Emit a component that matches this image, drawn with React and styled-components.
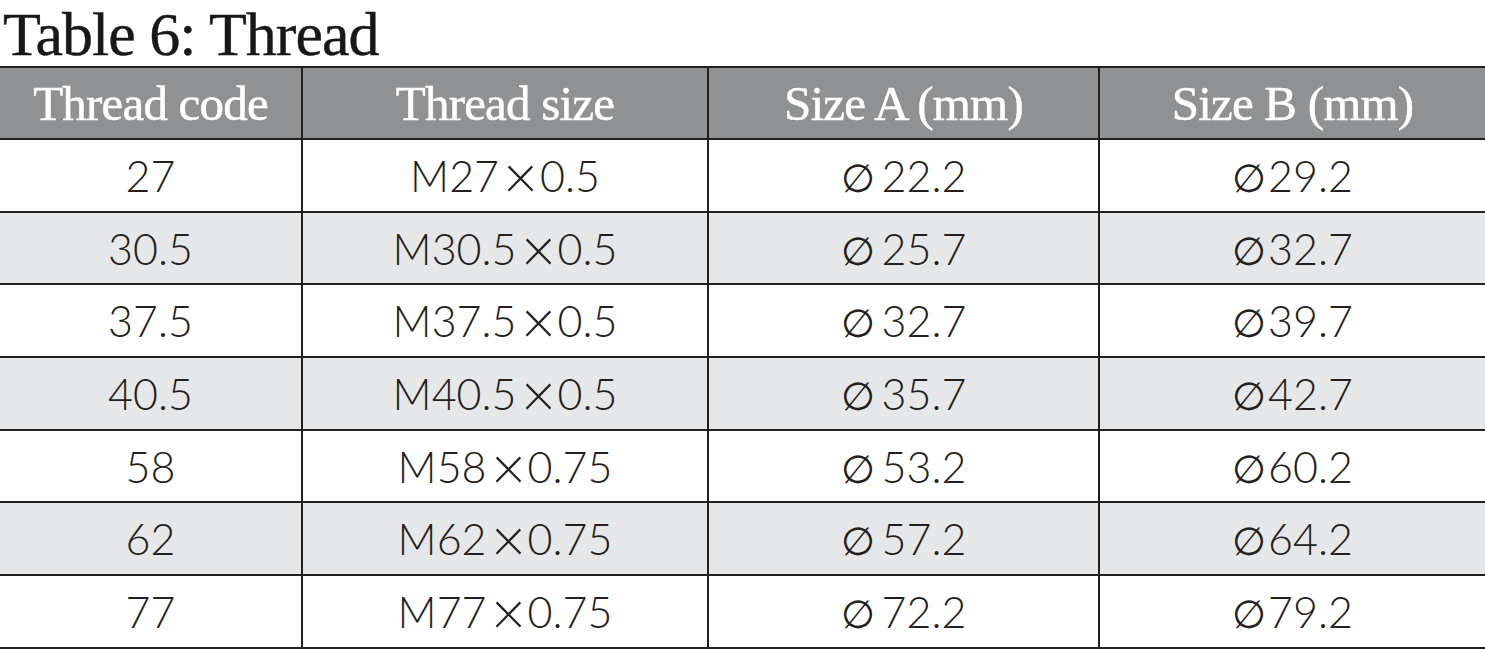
import React from "react";
import styled, { createGlobalStyle } from "styled-components";

const Global = createGlobalStyle`
  html, body { margin: 0; padding: 0; background: #ffffff; }
  body { width: 1485px; overflow: hidden; }
`;

const Page = styled.div`
  width: 1485px;
  display: flex;
  flex-direction: column;
`;

const Title = styled.h1`
  margin: 0;
  height: 66px;
  padding: 2px 0 0 3px;
  box-sizing: border-box;
  font-family: "Liberation Serif", "Times New Roman", serif;
  font-weight: normal;
  font-size: 62px;
  line-height: 64px;
  letter-spacing: -1px;
  color: #1a1718;
  -webkit-text-stroke: 0.4px #1a1718;
  white-space: nowrap;
`;

const Table = styled.div`
  display: flex;
  flex-direction: column;
  border-top: 2px solid #231f20;
`;

const Row = styled.div`
  display: grid;
  grid-template-columns: 301px 406px 391px 1fr;
  height: ${(p) => p.$h}px;
  box-sizing: border-box;
  border-bottom: 2px solid #231f20;
  background: ${(p) => p.$bg};
`;

const Cell = styled.div`
  display: flex;
  align-items: center;
  justify-content: center;
  border-left: ${(p) => (p.$first ? "none" : "2px solid #231f20")};
  white-space: nowrap;
`;

const HeadText = styled.span`
  font-family: "Liberation Serif", "Times New Roman", serif;
  font-size: 49px;
  letter-spacing: -0.8px;
  color: #ffffff;
  -webkit-text-stroke: 0.5px #ffffff;
`;

const BodyText = styled.span`
  font-family: Lato, "Liberation Sans", sans-serif;
  font-weight: 300;
  font-size: 43px;
  color: #231f20;
  display: inline-flex;
  align-items: baseline;
`;

const Times = styled.span`
  display: inline-block;
  transform: scale(1.4);
  margin: 0 ${(p) => p.$r}px 0 ${(p) => p.$l}px;
`;

const Phi = styled.span`
  font-family: "DejaVu Sans", sans-serif;
  font-weight: 200;
  font-size: 39px;
  margin-right: ${(p) => p.$gap}px;
`;

const rows = [
  ["27", "M27", "0.5", "22.2", "29.2"],
  ["30.5", "M30.5", "0.5", "25.7", "32.7"],
  ["37.5", "M37.5", "0.5", "32.7", "39.7"],
  ["40.5", "M40.5", "0.5", "35.7", "42.7"],
  ["58", "M58", "0.75", "53.2", "60.2"],
  ["62", "M62", "0.75", "57.2", "64.2"],
  ["77", "M77", "0.75", "72.2", "79.2"],
];

const heads = ["Thread code", "Thread size", "Size A (mm)", "Size B (mm)"];

export default function App() {
  return (
    <Page>
      <Global />
      <Title>Table 6: Thread</Title>
      <Table>
        <Row $h={72} $bg="#8f9193">
          {heads.map((h, i) => (
            <Cell key={h} $first={i === 0}>
              <HeadText>{h}</HeadText>
            </Cell>
          ))}
        </Row>
        {rows.map((r, i) => (
          <Row key={r[0]} $h={72.7} $bg={i % 2 === 1 ? "#e6e7e8" : "#ffffff"}>
            <Cell $first>
              <BodyText>{r[0]}</BodyText>
            </Cell>
            <Cell>
              <BodyText>
                {r[1]}
                <Times $l={9} $r={7}>×</Times>
                {r[2]}
              </BodyText>
            </Cell>
            <Cell>
              <BodyText>
                <Phi $gap={7}>∅</Phi>
                {r[3]}
              </BodyText>
            </Cell>
            <Cell>
              <BodyText>
                <Phi $gap={2}>∅</Phi>
                {r[4]}
              </BodyText>
            </Cell>
          </Row>
        ))}
      </Table>
    </Page>
  );
}
